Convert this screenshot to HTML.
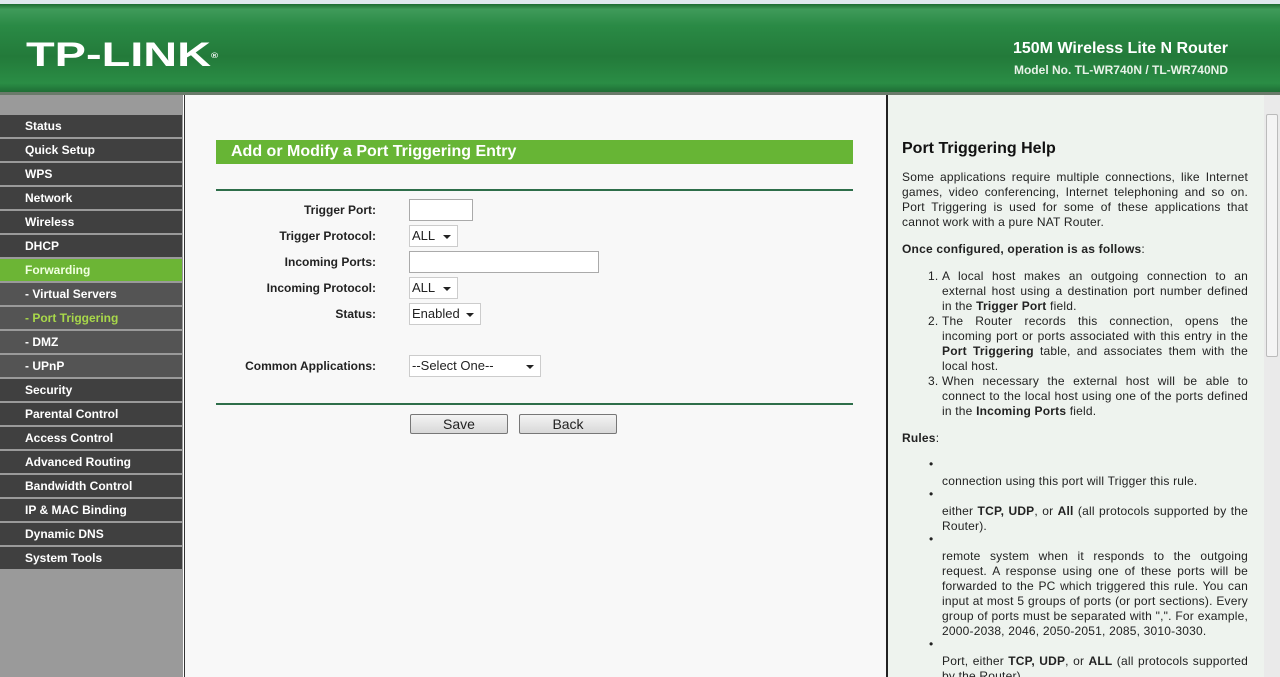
<!DOCTYPE html>
<html><head><meta charset="utf-8"><style>
*{margin:0;padding:0;box-sizing:border-box}
html,body{width:1280px;height:677px;overflow:hidden}
body{font-family:"Liberation Sans",Arial,sans-serif;background:#fff;position:relative}
#top{position:absolute;left:0;top:0;width:1280px;height:4px;background:#dfe8ef}
#hdr{position:absolute;left:0;top:4px;width:1280px;height:88px;background:linear-gradient(#1d6b32 0,#3f9a5a 6%,#2a8a45 25%,#237a3a 60%,#2a8d45 90%,#1f6e35 100%)}
#hdr .logo{position:absolute;left:26px;top:34px;color:#fff;font-weight:bold;font-size:34px;line-height:34px;transform:scaleX(1.38);transform-origin:left}
#hdr .logo sup{font-size:7px;vertical-align:top;position:relative;top:2px}
#hdr .r1{position:absolute;right:52px;top:36px;color:#fff;font-weight:bold;font-size:16px}
#hdr .r2{position:absolute;right:52px;top:59px;color:#e8f2e8;font-weight:bold;font-size:12px}
#sep{position:absolute;left:0;top:92px;width:1280px;height:3px;background:#6a7a6a}
#side{position:absolute;left:0;top:95px;width:183px;height:582px;background:#9a9a9a}
#side .it{position:absolute;left:0;width:182px;height:22px;background:#404040;color:#fff;font-weight:bold;font-size:12px;line-height:22px;padding-left:25px}
#side .sub{background:#545454}
#side .on{background:#6cb535;color:#f0ffe0}
#side .cur{color:#a8d84a}
#main{position:absolute;left:184px;top:95px;width:702px;height:582px;background:#f8f8f8;border-left:1px solid #333}
#help{position:absolute;left:886px;top:95px;width:378px;height:582px;overflow:hidden;background:#eef3ee;border-left:2px solid #222;padding:0 0 0 14px}
#sb{position:absolute;left:1264px;top:95px;width:16px;height:582px;background:#eaeaea}
#sb .th{position:absolute;left:2px;top:19px;width:12px;height:243px;background:#f4f4f4;border:1px solid #bbb;border-radius:2px}
.bar{position:absolute;left:216px;top:140px;width:637px;height:24px;background:#67b535;color:#fff;font-weight:bold;font-size:16px;line-height:24px;padding-left:15px}
.hl{position:absolute;left:216px;width:637px;height:2px;background:#2e6e4a}
.lb{position:absolute;font-weight:bold;font-size:12px;color:#222}
.inp{position:absolute;left:409px;height:22px;background:#fff;border:1px solid #aaa}
.sel{position:absolute;left:409px;height:22px;background:#fff;border:1px solid #ccc;font-size:13px;line-height:20px;padding-left:2px;color:#222}
.sel::after{content:"";position:absolute;right:6px;top:9px;border:4px solid transparent;border-top:4px solid #222;border-bottom:0}
.btn{position:absolute;top:414px;height:20px;width:98px;border:1px solid #777;border-radius:2px;background:linear-gradient(#f4f4f4,#d8d8d8);font-size:14px;text-align:center;line-height:18px;color:#222}
#help h1{font-size:16px;margin-top:45px;color:#111}
#help p,#help li{font-size:12px;line-height:15px;color:#222;text-align:justify;width:346px;letter-spacing:0.2px}
#help .t{margin-top:12px}
ol{margin:12px 0 0 40px;width:306px}
ol li{width:306px!important}
ul{list-style:none;margin:13px 0 0 40px}
ul li{width:306px!important;position:relative;padding-top:15px}
ul li::before{content:"•";position:absolute;left:-13px;top:-2px;font-size:12px}
</style></head><body>
<div id="top"></div>
<div id="hdr"><div class="logo">TP-LINK<sup>®</sup></div>
<div class="r1">150M Wireless Lite N Router</div><div class="r2">Model No. TL-WR740N / TL-WR740ND</div></div>
<div id="sep"></div>
<div id="side">
<div class="it" style="top:20px">Status</div>
<div class="it" style="top:44px">Quick Setup</div>
<div class="it" style="top:68px">WPS</div>
<div class="it" style="top:92px">Network</div>
<div class="it" style="top:116px">Wireless</div>
<div class="it" style="top:140px">DHCP</div>
<div class="it on" style="top:164px">Forwarding</div>
<div class="it sub" style="top:188px">- Virtual Servers</div>
<div class="it sub cur" style="top:212px">- Port Triggering</div>
<div class="it sub" style="top:236px">- DMZ</div>
<div class="it sub" style="top:260px">- UPnP</div>
<div class="it" style="top:284px">Security</div>
<div class="it" style="top:308px">Parental Control</div>
<div class="it" style="top:332px">Access Control</div>
<div class="it" style="top:356px">Advanced Routing</div>
<div class="it" style="top:380px">Bandwidth Control</div>
<div class="it" style="top:404px">IP &amp; MAC Binding</div>
<div class="it" style="top:428px">Dynamic DNS</div>
<div class="it" style="top:452px">System Tools</div>
</div>
<div id="main"></div>
<div class="bar">Add or Modify a Port Triggering Entry</div>
<div class="hl" style="top:189px"></div>
<div class="lb" style="top:203px;right:904px">Trigger Port:</div>
<div class="inp" style="top:199px;width:64px"></div>
<div class="lb" style="top:229px;right:904px">Trigger Protocol:</div>
<div class="sel" style="top:225px;width:49px">ALL</div>
<div class="lb" style="top:255px;right:904px">Incoming Ports:</div>
<div class="inp" style="top:251px;width:190px"></div>
<div class="lb" style="top:281px;right:904px">Incoming Protocol:</div>
<div class="sel" style="top:277px;width:49px">ALL</div>
<div class="lb" style="top:307px;right:904px">Status:</div>
<div class="sel" style="top:303px;width:72px">Enabled</div>
<div class="lb" style="top:359px;right:904px">Common Applications:</div>
<div class="sel" style="top:355px;width:132px">--Select One--</div>
<div class="hl" style="top:403px"></div>
<div class="btn" style="left:410px">Save</div>
<div class="btn" style="left:519px">Back</div>
<div id="help">
<h1>Port Triggering Help</h1>
<p class="t">Some applications require multiple connections, like Internet games, video conferencing, Internet telephoning and so on. Port Triggering is used for some of these applications that cannot work with a pure NAT Router.</p>
<p class="t"><b>Once configured, operation is as follows</b>:</p>
<ol>
<li>A local host makes an outgoing connection to an external host using a destination port number defined in the <b>Trigger Port</b> field.</li>
<li>The Router records this connection, opens the incoming port or ports associated with this entry in the <b>Port Triggering</b> table, and associates them with the local host.</li>
<li>When necessary the external host will be able to connect to the local host using one of the ports defined in the <b>Incoming Ports</b> field.</li>
</ol>
<p class="t" style="margin-top:12px"><b>Rules</b>:</p>
<ul>
<li>connection using this port will Trigger this rule.</li>
<li>either <b>TCP, UDP</b>, or <b>All</b> (all protocols supported by the Router).</li>
<li>remote system when it responds to the outgoing request. A response using one of these ports will be forwarded to the PC which triggered this rule. You can input at most 5 groups of ports (or port sections). Every group of ports must be separated with ",". For example, 2000-2038, 2046, 2050-2051, 2085, 3010-3030.</li>
<li>Port, either <b>TCP, UDP</b>, or <b>ALL</b> (all protocols supported by the Router).</li>
</ul>
</div>
<div id="sb"><div class="th"></div></div>
</body></html>
